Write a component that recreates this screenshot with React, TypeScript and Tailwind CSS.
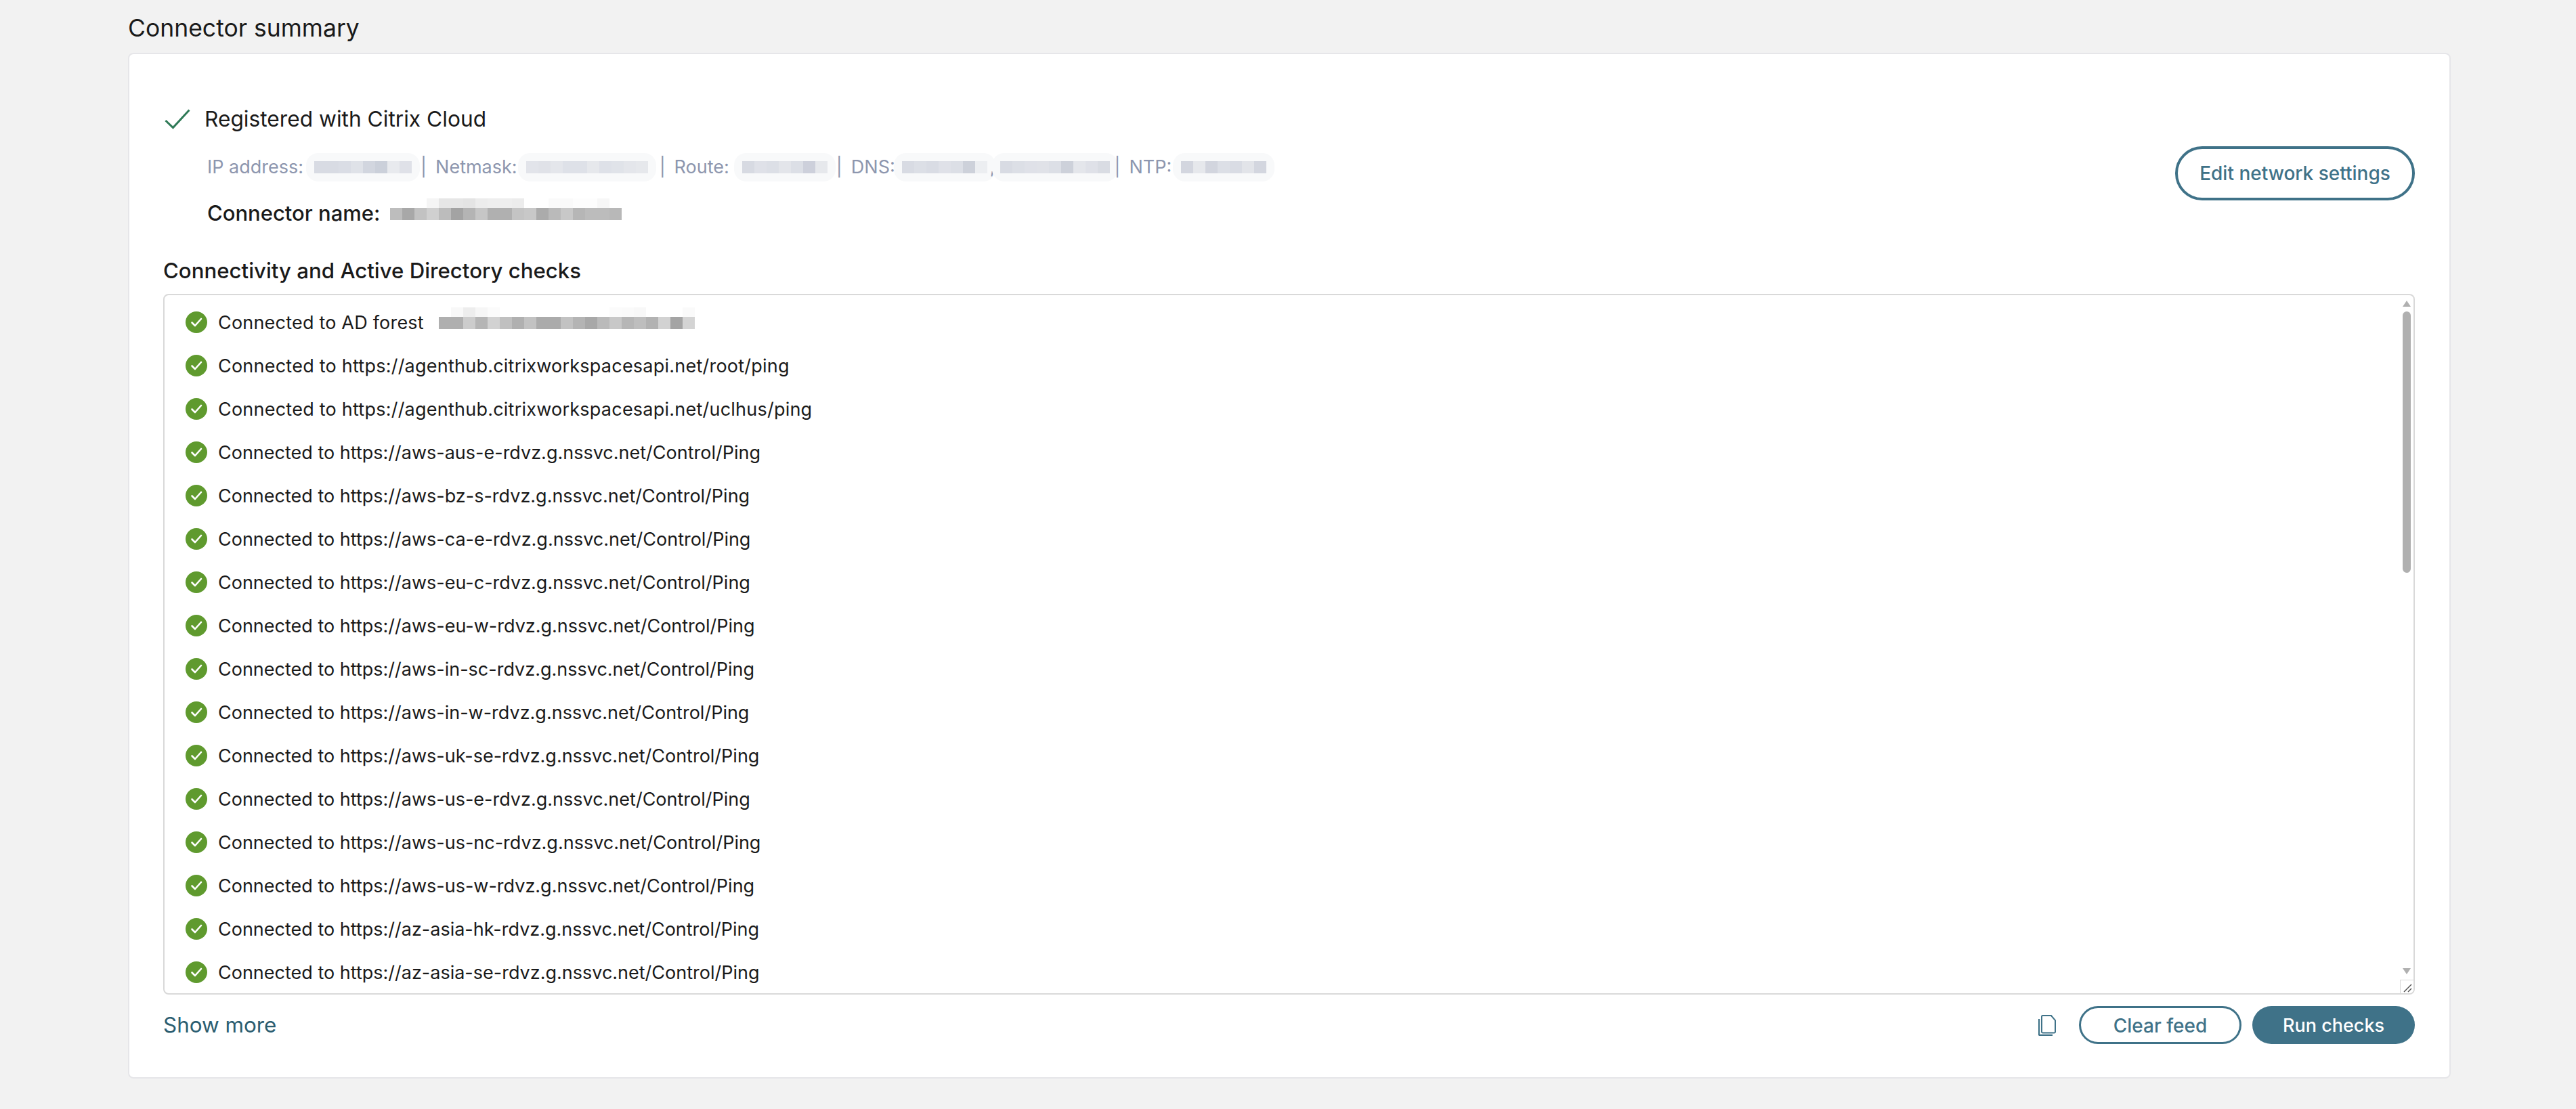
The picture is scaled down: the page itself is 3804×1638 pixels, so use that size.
const HOSTS = [
  "agenthub.citrixworkspacesapi.net/root/ping",
  "agenthub.citrixworkspacesapi.net/uclhus/ping",
  "aws-aus-e-rdvz.g.nssvc.net/Control/Ping",
  "aws-bz-s-rdvz.g.nssvc.net/Control/Ping",
  "aws-ca-e-rdvz.g.nssvc.net/Control/Ping",
  "aws-eu-c-rdvz.g.nssvc.net/Control/Ping",
  "aws-eu-w-rdvz.g.nssvc.net/Control/Ping",
  "aws-in-sc-rdvz.g.nssvc.net/Control/Ping",
  "aws-in-w-rdvz.g.nssvc.net/Control/Ping",
  "aws-uk-se-rdvz.g.nssvc.net/Control/Ping",
  "aws-us-e-rdvz.g.nssvc.net/Control/Ping",
  "aws-us-nc-rdvz.g.nssvc.net/Control/Ping",
  "aws-us-w-rdvz.g.nssvc.net/Control/Ping",
  "az-asia-hk-rdvz.g.nssvc.net/Control/Ping",
  "az-asia-se-rdvz.g.nssvc.net/Control/Ping",
];

// redacted values in the source, pixelated blocks
const Mosaic = ({ cells, haze, top }: { cells: string[]; haze?: boolean; top?: string[] }) => (
  <span className="relative inline-flex h-[18px] shrink-0">
    {haze && <span className="absolute -inset-x-[12px] -inset-y-[12px] rounded-[18px] bg-[#f8f9fa]" />}
    {top && (
      <span className="absolute bottom-full left-0 flex">
        {top.map((c, i) => (
          <span key={i} className="h-[14px] w-[18px]" style={{ backgroundColor: c }} />
        ))}
      </span>
    )}
    {cells.map((c, i) => (
      <span key={i} className="relative h-[18px] w-[18px]" style={{ backgroundColor: c }} />
    ))}
  </span>
);

const Pipe = () => <span className="relative mx-[13px] text-[#8d96ae]">|</span>;

const CheckBadge = () => (
  <svg width="32" height="32" viewBox="0 0 32 32" className="shrink-0">
    <circle cx="16" cy="16" r="16" fill="#5f9a2e" />
    <path d="M9.5 16.5l4.5 4.5 9-10" fill="none" stroke="#fff" strokeWidth="2.6" strokeLinecap="round" strokeLinejoin="round" />
  </svg>
);

const CopyIcon = () => (
  <svg width="26" height="31" viewBox="0 0 26 31" fill="none" stroke="#3f7288" strokeWidth="2">
    <path d="M5 2.5 a1.5 1.5 0 0 1 1.5-1.5 H19 l6 7 V25 a1.5 1.5 0 0 1-1.5 1.5 H6.5 A1.5 1.5 0 0 1 5 25 Z" />
    <path d="M1 6 V28.5 a1.5 1.5 0 0 0 1.5 1.5 H21" strokeWidth="2.4" />
  </svg>
);

const App = () => (
  <div className="min-h-screen bg-[#f2f2f2] pl-[189px] pr-[185px] pt-[22px] font-['Inter',sans-serif] text-[#1a1a1a]">
    <h2 className="h-[40px] text-[35.5px] leading-[40px] font-normal">Connector summary</h2>

    <div className="mt-[16px] rounded-[8px] border-2 border-[#e6e6e9] bg-white pl-[50px] pr-[51px] pt-[76px] pb-[49px]">
      <div className="flex items-start justify-between">
        <div>
          <div className="flex h-[40px] items-center">
            <svg width="38" height="30" viewBox="0 0 38 30" fill="none" stroke="#2f7a57" strokeWidth="3" className="ml-[2px]">
              <path d="M1.5 17l11 10.5L36.5 1.5" />
            </svg>
            <span className="ml-[21px] text-[31.7px] leading-[40px]">Registered with Citrix Cloud</span>
          </div>

          <div className="mt-[31px] flex h-[40px] items-center pl-[65px] text-[27px] leading-[40px] text-[#8d96ae]">
            <span>IP address:</span>
            <span className="ml-[16px]" />
            <Mosaic haze cells={["#d8dbe3", "#d8dbe3", "#dadde5", "#dfe2e8", "#d2d6df", "#cbd0da", "#e8eaee", "#dfe1e8"]} />
            <Pipe />
            <span>Netmask:</span>
            <span className="ml-[13px]" />
            <Mosaic haze cells={["#e2e4ea", "#e0e2e8", "#e4e6eb", "#dee1e8", "#dee1e8", "#e6e8ec", "#dee1e8", "#e0e3e9", "#e4e6eb", "#e6e8ec"]} />
            <span className="ml-[4px]" />
            <Pipe />
            <span>Route:</span>
            <span className="ml-[19px]" />
            <Mosaic haze cells={["#d7dae2", "#dfe1e8", "#dcdfe6", "#e3e5ea", "#dcdfe6", "#cdd0db", "#e6e8ec"]} />
            <Pipe />
            <span>DNS:</span>
            <span className="ml-[10px]" />
            <Mosaic haze cells={["#d8dbe3", "#dcdfe6", "#d9dce4", "#dfe1e8", "#dcdfe6", "#cdd1da", "#eceef1"]} />
            <span className="relative ml-[4px]">,</span>
            <span className="ml-[7px]" />
            <Mosaic haze cells={["#d8dbe3", "#dcdfe6", "#dfe1e8", "#e0e2e8", "#dcdfe6", "#cdd1da", "#e4e6eb", "#dfe1e8", "#d9dce3"]} />
            <span className="-ml-[6px]" />
            <Pipe />
            <span>NTP:</span>
            <span className="ml-[14px]" />
            <Mosaic haze cells={["#d3d6df", "#e6e8ec", "#d2d5de", "#dcdfe6", "#d9dce4", "#e2e4e9", "#d3d6df"]} />
          </div>

          <div className="mt-[28px] flex h-[40px] items-center pl-[65px]">
            <span className="text-[31px] leading-[40px] font-medium">Connector name:</span>
            <span className="ml-[15px] mt-[8px]">
              <Mosaic
                top={["transparent", "transparent", "transparent", "#f5f5f5", "#e6e6e6", "#e6e6e6", "#e4e4e4", "#ececec", "#eeeeee", "#eeeeee", "#ececec", "transparent", "transparent", "#fafafa", "#fafafa", "#fdfdfd", "#fdfdfd", "#f7f7f7", "transparent"]}
                cells={["#bdbdbd", "#a8a8a8", "#c2c2c2", "#d0d0d0", "#bcbcbc", "#a3a3a3", "#b4b4b4", "#c6c6c6", "#b0b0b0", "#b0b0b0", "#c4c4c4", "#c8c8c8", "#ababab", "#bababa", "#c8c8c8", "#b6b6b6", "#bcbcbc", "#bcbcbc", "#b8b8b8"]}
              />
            </span>
          </div>
        </div>

        <button className="mt-[60px] h-[80px] w-[354px] rounded-full border-[4px] border-[#3f7288] text-[28px] font-medium text-[#3f7288]">
          Edit network settings
        </button>
      </div>

      <h3 className="mt-[45px] h-[40px] text-[31.2px] leading-[40px] font-medium">Connectivity and Active Directory checks</h3>

      <div className="relative mt-[14px] h-[1035px] overflow-hidden rounded-[8px] border-2 border-[#d9d9d9] pt-[8px] pl-[31px]">
        <div className="flex h-[64px] items-center gap-[16px] text-[27px]">
          <CheckBadge />
          <span className="pt-[2px] tracking-[0.2px]">Connected to AD forest</span>
          <span className="ml-[6px] mt-[2px]">
            <Mosaic
              top={["transparent", "#f8f8f8", "#ededed", "#f6f6f6", "#fbfbfb", "transparent", "transparent", "transparent", "transparent", "transparent", "transparent", "transparent", "transparent", "transparent", "#fbfbfb", "#fafafa", "#f8f8f8", "transparent", "transparent", "transparent", "#fafafa"]}
              cells={["#afafaf", "#afafaf", "#cccccc", "#b5b5b5", "#d2d2d2", "#c0c0c0", "#b0b0b0", "#c2c2c2", "#ababab", "#ababab", "#c2c2c2", "#b4b4b4", "#a8a8a8", "#bababa", "#c8c8c8", "#b6b6b6", "#bebebe", "#b2b2b2", "#d2d2d2", "#a4a4a4", "#d4d4d4"]}
            />
          </span>
        </div>
        {HOSTS.map((host, i) => (
          <div key={host} className="flex h-[64px] items-center gap-[16px] text-[27px]">
            <CheckBadge />
            <span className={i < 2 ? "pt-[2px] tracking-[0.23px]" : "pt-[2px]"}>Connected to https://{host}</span>
          </div>
        ))}

        {/* scrollbar and resize grip sit over the feed */}
        <div className="absolute right-[4px] top-[8px] h-0 w-0 border-x-[6px] border-b-[9px] border-x-transparent border-b-[#b0b0b0]" />
        <div className="absolute right-[4px] top-[24px] h-[386px] w-[12px] rounded-full bg-[#b0b0b0]" />
        <div className="absolute bottom-[28px] right-[4px] h-0 w-0 border-x-[6px] border-t-[9px] border-x-transparent border-t-[#b0b0b0]" />
        <div className="absolute bottom-0 right-0 h-[20px] w-[20px] border-l border-t border-[#d9d9d9] bg-white">
          <svg width="18" height="18" viewBox="0 0 18 18" stroke="#555" strokeWidth="1.5">
            <path d="M5 17L16 6M11 17l5-5" />
          </svg>
        </div>
      </div>

      <div className="mt-[17px] flex h-[56px] items-center justify-between">
        <a className="pt-[2px] text-[31.4px] text-[#2b5d70]">Show more</a>
        <div className="flex items-center">
          <CopyIcon />
          <button className="ml-[34px] h-[56px] w-[240px] rounded-full border-[3px] border-[#3f7288] pt-[2px] text-[28px] font-medium text-[#3f7288]">
            Clear feed
          </button>
          <button className="ml-[16px] h-[56px] w-[240px] rounded-full bg-[#3f7288] pt-[2px] text-[27px] font-medium text-white">
            Run checks
          </button>
        </div>
      </div>
    </div>
  </div>
);

export default App;
